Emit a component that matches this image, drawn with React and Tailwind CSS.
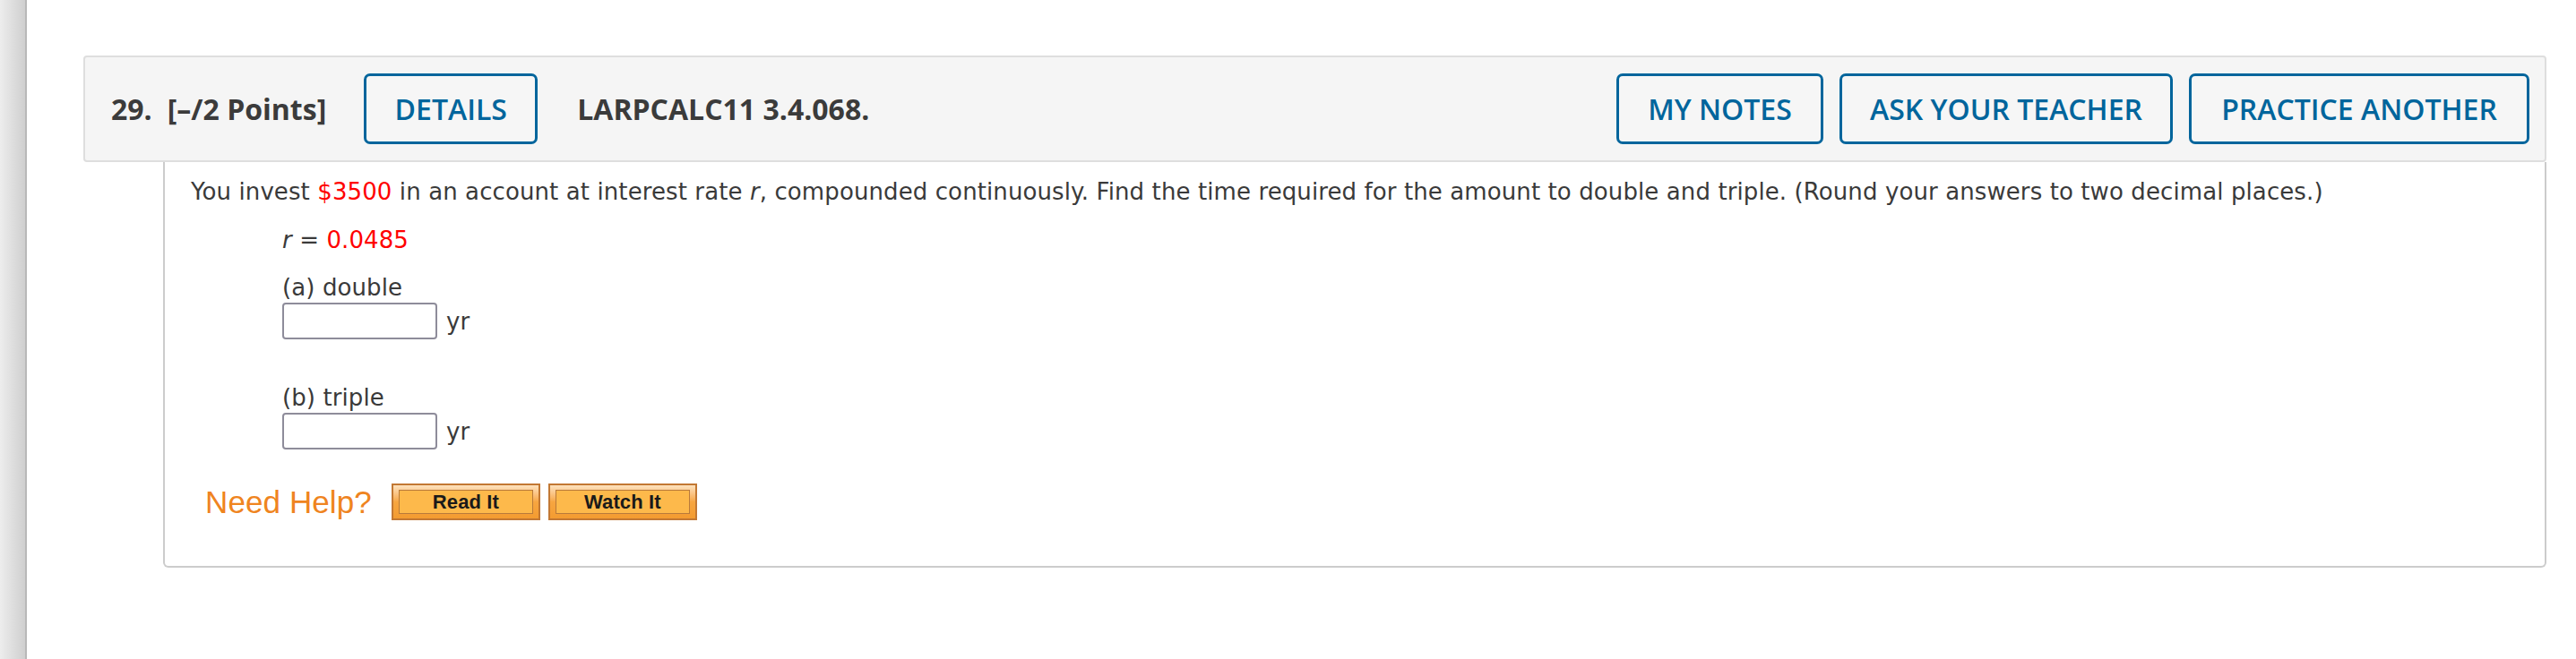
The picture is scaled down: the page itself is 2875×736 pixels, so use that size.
import React from "react";

const blueBtn =
  "flex h-[79px] items-center justify-center rounded-[7px] border-[3px] border-[#00659c] bg-[#f6f6f6] text-[32px] font-semibold text-[#00659c]";

function HelpButton({ label }) {
  return (
    <div className="flex h-[41px] w-[166px] border-2 border-[#c27833] bg-gradient-to-b from-[#fde2bd] via-[#f7a640] to-[#f39b30] px-[6px] py-[5px]">
      <div className="flex flex-1 items-center justify-center border border-[#b97a3a] bg-[#fdb94b] text-[22px] font-bold leading-none text-[#1a1a1a] font-['Liberation_Sans',Arial,sans-serif]">
        {label}
      </div>
    </div>
  );
}

export default function App() {
  return (
    <div className="flex min-h-[736px] w-[2875px] bg-white">
      <div className="w-[30px] shrink-0 border-r-2 border-[#b8b8b8] bg-gradient-to-r from-[#ededed] to-[#cfcfcf]" />

      <div className="flex-1 pl-[63px] pr-[33px] pt-[62px]">
        {/* question header */}
        <div className="flex h-[119px] items-center rounded-[4px] border-2 border-[#dedede] bg-[#f5f5f5] pl-[29px] pr-[17px] font-['Open_Sans',sans-serif] text-[#3b3b3b]">
          <span className="text-[32px] font-bold">29.</span>
          <span className="ml-[17px] text-[32px] font-bold">[–/2 Points]</span>
          <button className={`${blueBtn} ml-[42px] w-[194px]`}>DETAILS</button>
          <span className="ml-[44px] text-[32px] font-bold">LARPCALC11 3.4.068.</span>

          <div className="ml-auto flex gap-[18px]">
            <button className={`${blueBtn} w-[231px]`}>MY NOTES</button>
            <button className={`${blueBtn} w-[372px]`}>ASK YOUR TEACHER</button>
            <button className={`${blueBtn} w-[380px]`}>PRACTICE ANOTHER</button>
          </div>
        </div>

        {/* question body */}
        <div className="ml-[89px] h-[453px] rounded-b-[6px] border-x-2 border-b-2 border-[#cccccc] pl-[29px] pt-[13px] font-['DejaVu_Sans',Verdana,sans-serif] text-[26px] leading-[40px] tracking-[0.1px] text-[#3a3a3a]">
          <p>
            You invest <span className="text-[#f00]">$3500</span> in an account at interest rate <i>r</i>, compounded
            continuously. Find the time required for the amount to double and triple. (Round your answers to two
            decimal places.)
          </p>

          <div className="ml-[102px] mt-[14px]">
            <p>
              <i>r</i> = <span className="text-[#f00]">0.0485</span>
            </p>

            <p className="mt-[13px]">(a) double</p>
            <div className="-mt-[3px] flex items-center">
              <input className="h-[41px] w-[173px] rounded-[4px] border-2 border-[#8e8c9a] bg-white" />
              <span className="ml-[10px]">yr</span>
            </div>

            <p className="mt-[45px]">(b) triple</p>
            <div className="-mt-[3px] flex items-center">
              <input className="h-[41px] w-[173px] rounded-[4px] border-2 border-[#8e8c9a] bg-white" />
              <span className="ml-[10px]">yr</span>
            </div>
          </div>

          <div className="mt-[38px] flex items-center">
            <span className="ml-[16px] mr-[22px] text-[35px] text-[#ef8420] font-['Liberation_Sans',Arial,sans-serif]">
              Need Help?
            </span>
            <HelpButton label="Read It" />
            <div className="w-[9px]" />
            <HelpButton label="Watch It" />
          </div>
        </div>
      </div>
    </div>
  );
}
